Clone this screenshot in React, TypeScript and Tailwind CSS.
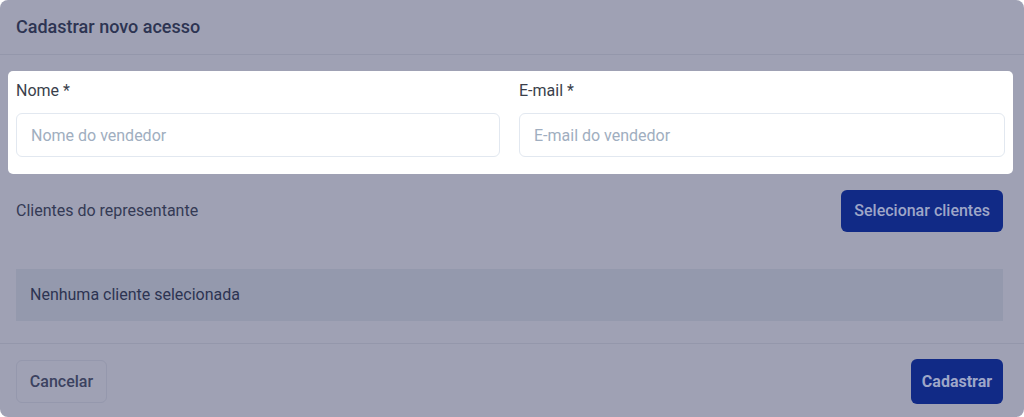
export default function App() {
  return (
    <div className="w-[1024px] h-[417px] bg-white" style={{ fontFamily: "Roboto, 'Noto Sans', sans-serif" }}>
      <div className="h-full rounded-lg bg-[#9fa1b4] flex flex-col">
        <div className="h-[55px] border-b border-[#9497ab] pl-4 flex items-center">
          <h2 className="text-[18px] leading-7 font-medium text-[#2d3452] pb-[1px]">Cadastrar novo acesso</h2>
        </div>
        <div className="pt-4 pl-2 pr-[11px]">
          <div className="bg-white rounded-[5px] px-2 pt-[8px] pb-[17px] grid grid-cols-[484px_1fr] gap-[19px]">
            <div className="flex flex-col">
              <label className="text-[16px] text-[#3a3f4c] leading-6">Nome *</label>
              <input
                className="mt-[10px] h-[44px] rounded-md border border-[#e2e8f0] px-[14px] text-[16px] placeholder:text-[#a0aec0] outline-none"
                placeholder="Nome do vendedor"
              />
            </div>
            <div className="flex flex-col">
              <label className="text-[16px] text-[#3a3f4c] leading-6">E-mail *</label>
              <input
                className="mt-[10px] h-[44px] rounded-md border border-[#e2e8f0] px-[14px] text-[16px] placeholder:text-[#a0aec0] outline-none"
                placeholder="E-mail do vendedor"
              />
            </div>
          </div>
        </div>
        <div className="pl-4 pr-[21px] pt-4 flex items-center justify-between">
          <span className="text-[16px] text-[#343a55]">Clientes do representante</span>
          <button className="h-[42px] px-[13px] rounded-md bg-[#112a86] text-[16px] font-medium text-[#9ea6c8]">
            Selecionar clientes
          </button>
        </div>
        <div className="pl-4 pr-[21px] pt-[37px]">
          <div className="h-[52px] bg-[#9499ad] flex items-center pl-[14px]">
            <span className="text-[16px] text-[#2d3452]">Nenhuma cliente selecionada</span>
          </div>
        </div>
        <div className="mt-[22px] border-t border-[#9497ab] pl-4 pr-[21px] pt-[15px] flex items-center justify-between">
          <button className="h-[43px] w-[91px] rounded-md border border-[#9598ad] text-[16px] font-medium text-[#3b4260]">
            Cancelar
          </button>
          <button className="h-[45px] w-[92px] rounded-md bg-[#112a86] text-[16px] font-bold text-[#9ea6c8]">
            Cadastrar
          </button>
        </div>
      </div>
    </div>
  );
}
